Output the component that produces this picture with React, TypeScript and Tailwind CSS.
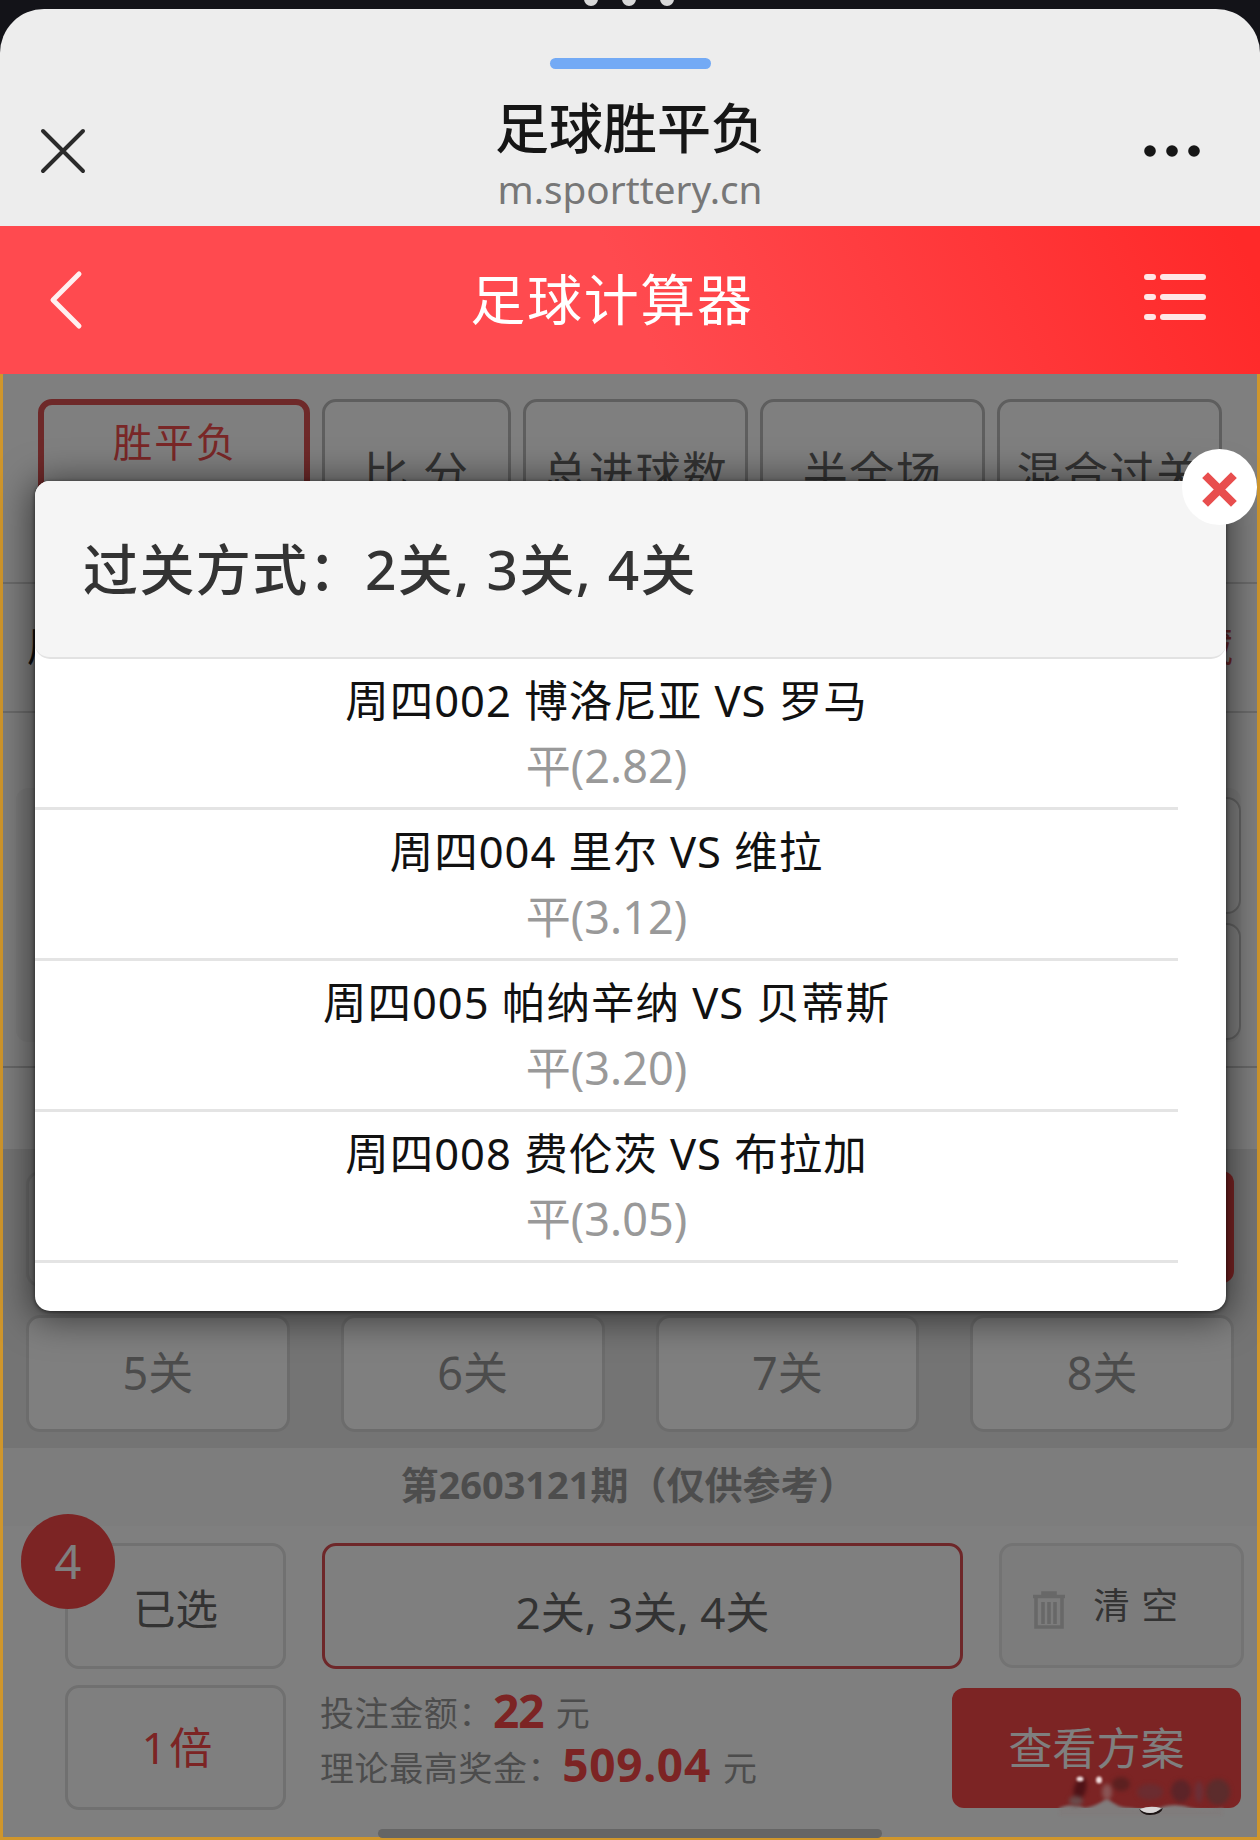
import React from 'react';

interface Match {
  name: string;
  pick: string;
}

const MATCHES: Match[] = [
  { name: '周四002 博洛尼亚 VS 罗马', pick: '平(2.82)' },
  { name: '周四004 里尔 VS 维拉', pick: '平(3.12)' },
  { name: '周四005 帕纳辛纳 VS 贝蒂斯', pick: '平(3.20)' },
  { name: '周四008 费伦茨 VS 布拉加', pick: '平(3.05)' },
];

const TABS = [
  { label: '比 分', width: 'w-[189px]' },
  { label: '总进球数', width: 'w-[225px]' },
  { label: '半全场', width: 'w-[225px]' },
  { label: '混合过关', width: 'w-[225px]' },
];

const PASSES = ['5关', '6关', '7关', '8关'];

const SheetHeader: React.FC = () => (
  <header className="h-[217px] shrink-0 rounded-t-[44px] bg-[#ededed] flex flex-col items-center relative">
    <div className="mt-[49px] w-[161px] h-[11px] rounded-full bg-[#73aaf5]" />
    <div className="w-full flex items-center justify-between pl-[40px] pr-[60px] mt-[20px]">
      <svg className="w-[46px] h-[46px]" viewBox="0 0 46 46" stroke="#2a2a2a" strokeWidth="4" strokeLinecap="round">
        <path d="M3 3L43 43M43 3L3 43" />
      </svg>
      <div className="flex flex-col items-center pl-[30px]">
        <h1 className="text-[54px] leading-[78px] font-medium text-[#161616]">足球胜平负</h1>
        <p className="text-[38.7px] leading-[46px] -mt-px pb-[1px] text-[#777777]">m.sporttery.cn</p>
      </div>
      <svg className="w-[56px] h-[12px]" viewBox="0 0 56 12" fill="#161616">
        <circle cx="6" cy="6" r="5.8" />
        <circle cx="28" cy="6" r="5.8" />
        <circle cx="50" cy="6" r="5.8" />
      </svg>
    </div>
  </header>
);

const NavBar: React.FC = () => (
  <nav className="h-[148px] shrink-0 flex items-center justify-between pl-[48px] pr-[53px] bg-[linear-gradient(65deg,#ff4a4f_50%,#ff2929_98%)]">
    <svg className="w-[36px] h-[60px]" viewBox="0 0 36 60" fill="none" stroke="#fff0f0" strokeWidth="5" strokeLinecap="round" strokeLinejoin="round">
      <path d="M31 4L5 30L31 56" />
    </svg>
    <h2 className="text-[55px] leading-none tracking-[1.7px] text-white pr-[4px] pb-[3px]">足球计算器</h2>
    <svg className="w-[63px] h-[48px] mb-[6px]" viewBox="0 0 63 48" stroke="#ffe6e6" strokeWidth="6" strokeLinecap="round">
      <path d="M3 4H9M19 4H59M3 24H9M19 24H59M3 44H9M19 44H59" />
    </svg>
  </nav>
);

const Tabs: React.FC = () => (
  <div className="h-[210px] shrink-0 border-b-2 border-[#d8d8d8] pt-[25px] pl-[35px] flex gap-[12px]">
    <div className="w-[272px] h-[150px] rounded-[14px] border-[6px] border-[#dc5252] flex justify-center pt-[13px]">
      <span className="text-[39.5px] leading-[48px] tracking-[2px] text-[#f24f4f] pl-[2px]">胜平负</span>
    </div>
    {TABS.map(tab => (
      <div key={tab.label} className={`${tab.width} h-[150px] rounded-[14px] border-[3px] border-[#bcbcbc] flex items-center justify-center`}>
        <span className="text-[45px] leading-none tracking-[1.5px] text-[#666666] whitespace-nowrap pb-[3px]">{tab.label}</span>
      </div>
    ))}
  </div>
);

const MatchArea: React.FC = () => (
  <>
    <div className="h-[129px] shrink-0 border-b-2 border-[#d8d8d8] pl-[24px] pr-[24px] flex items-center justify-between text-[40px]">
      <span className="text-[#222222] pb-[3px]">周</span>
      <span className="text-[#d84f4f] pb-[3px]">收藏</span>
    </div>
    <div className="h-[355px] shrink-0 border-b-2 border-[#d0d0d0] pt-[75px] pl-[13px] pr-[16px]">
      <div className="h-[254px] pt-[9px] rounded-[12px] bg-[#f6f6f6] flex flex-col items-end gap-[9px]">
        <div className="w-[300px] h-[117px] rounded-[14px] border-2 border-[#c8c8c8] bg-white" />
        <div className="w-[300px] h-[117px] rounded-[14px] border-2 border-[#c8c8c8] bg-white" />
      </div>
    </div>
    <div className="h-[81px] shrink-0" />
  </>
);

const PassGrid: React.FC = () => (
  <div className="h-[299px] shrink-0 bg-[#e8e8e8] pt-[22px] pl-[23px] pr-[23px] grid grid-cols-4 gap-x-[51px] gap-y-[28px] content-start">
    {['', '', ''].map((_, i) => (
      <div key={i} className="h-[116px] rounded-[14px] border-[3px] border-[#d9d9d9] bg-[#eeeeee]" />
    ))}
    <div className="h-[112px] rounded-[12px] bg-[#f84848]" />
    {PASSES.map(label => (
      <div key={label} className="h-[117px] rounded-[14px] border-[3px] border-[#d9d9d9] bg-white flex items-center justify-center">
        <span className="text-[45px] leading-none text-[#999999] pb-[2px]">{label}</span>
      </div>
    ))}
  </div>
);

const BetPanel: React.FC = () => (
  <>
    <div className="h-[78px] shrink-0 bg-[#fafafa] flex items-center justify-center">
      <span className="text-[38px] leading-none font-bold text-[#9b9b9b] pr-[3px] pb-[6px]">第2603121期（仅供参考）</span>
    </div>
    <div className="grow bg-white pt-[17px] pl-[62px] pr-[13px] flex flex-col">
      <div className="h-[126px] flex">
        <div className="relative w-[221px] h-[126px] rounded-[14px] border-[3px] border-[#e2e2e2] flex items-center justify-center pt-[7px]">
          <span className="text-[42.5px] leading-none text-[#666666]">已选</span>
          <span className="absolute -left-[47px] -top-[32px] w-[94px] h-[95px] rounded-full bg-[#f84848] text-[#ffffff] text-[47px] flex items-center justify-center">4</span>
        </div>
        <div className="ml-[36px] w-[642px] h-[126px] rounded-[14px] border-[3px] border-[#dc4e52] flex items-center justify-center pt-[12px]">
          <span className="text-[44px] leading-none text-[#666666]">2关, 3关, 4关</span>
        </div>
        <div className="ml-[36px] w-[245px] h-[125px] rounded-[14px] border-[3px] border-[#e6e6e6] bg-[#f9f9f9] flex items-center pl-[31px]">
          <svg className="w-[32px] h-[38px] mt-[8px]" viewBox="0 0 32 38" fill="none" stroke="#d0d0d0" strokeWidth="3.6">
            <path d="M0 5.5H32M10 4V2H22V4M3 6V36H29V6M10 11V33M16 11V33M22 11V33" />
          </svg>
          <span className="ml-[28px] text-[36.5px] leading-none tracking-[1.2px] text-[#666666]">清 空</span>
        </div>
      </div>
      <div className="mt-[16px] h-[125px] flex">
        <div className="w-[221px] h-[125px] rounded-[14px] border-[3px] border-[#e0e0e0] flex items-center justify-center">
          <span className="text-[43px] leading-none text-[#f84848] pl-[3px]">
            1<span className="ml-[3px]">倍</span>
          </span>
        </div>
        <div className="ml-[34px] w-[632px] text-[34px] tracking-[0.6px] text-[#999999] whitespace-nowrap">
          <p className="h-[55px] flex items-center">
            <span className="pt-[2px]">投注金额：</span>
            <b className="text-[46px] leading-[50px] tracking-[-1px] text-[#f84848] pb-[6px]">22</b>
            <span className="ml-[12px] pt-[2px]">元</span>
          </p>
          <p className="h-[55px] flex items-center">
            <span className="pt-[1px]">理论最高奖金：</span>
            <b className="text-[46px] leading-[50px] tracking-[0.7px] text-[#f84848] pb-[7px]">509.04</b>
            <span className="ml-[12px] pt-[1px]">元</span>
          </p>
        </div>
        <div className="mt-[3px] w-[289px] h-[120px] rounded-[12px] bg-[#f84848] flex items-center justify-center">
          <span className="text-[44px] leading-none text-white">查看方案</span>
        </div>
      </div>
    </div>
  </>
);

const Modal: React.FC = () => (
  <section className="absolute left-[35px] top-[481px] w-[1191px] h-[830px] rounded-[15px] bg-white shadow-[0_4px_36px_4px_rgba(0,0,0,0.55),0_1px_4px_rgba(0,0,0,0.6)]">
    <div className="h-[178px] rounded-[15px] border-b-2 border-[#e2e2e2] bg-[#f5f5f5] pl-[48px] flex items-center">
      <h3 className="text-[55px] leading-none tracking-[1.4px] font-medium text-[#333333] whitespace-nowrap pb-[2px]">过关方式：2关, 3关, 4关</h3>
    </div>
    <ul className="w-[1143px]">
      {MATCHES.map(match => (
        <li key={match.name} className="h-[151px] border-b-[3px] border-[#e4e4e4] flex flex-col items-center pt-[8px]">
          <span className="text-[43.5px] leading-[66px] tracking-[1px] text-[#111111] whitespace-nowrap">{match.name}</span>
          <span className="text-[45px] leading-[66px] text-[#999999]">{match.pick}</span>
        </li>
      ))}
    </ul>
    <button className="absolute left-[1147px] -top-[32px] w-[75px] h-[76px] rounded-full bg-white flex items-center justify-center">
      <svg className="w-[35px] h-[35px] mt-[4px]" viewBox="0 0 34 34" stroke="#e84e4e" strokeWidth="8">
        <path d="M3 3L31 31M31 3L3 31" />
      </svg>
    </button>
  </section>
);

// blurred watermark in the bottom right corner
const Smudge: React.FC = () => (
  <svg className="absolute left-[1055px] top-[1770px] w-[180px] h-[50px]" viewBox="0 0 180 50">
    <path d="M4 38Q18 32 30 38Q42 36 52 28Q62 38 76 38Q90 42 104 38Q120 32 136 38Q152 42 168 38V46H4Z" fill="#807c7c" className="blur-[1.5px]" />
    <g className="blur-[2px]">
      <ellipse cx="25" cy="19" rx="6" ry="12" fill="#4e1216" transform="rotate(15 25 19)" />
      <ellipse cx="21" cy="31" rx="7" ry="5" fill="#6a4a4a" />
      <ellipse cx="52" cy="22" rx="5" ry="8" fill="#8a5555" />
      <ellipse cx="66" cy="14" rx="9" ry="7" fill="#5c2020" />
      <ellipse cx="95" cy="22" rx="13" ry="8" fill="#6b2c30" />
      <ellipse cx="126" cy="21" rx="10" ry="11" fill="#5c2428" />
      <ellipse cx="144" cy="22" rx="4" ry="11" fill="#6b3038" />
      <ellipse cx="163" cy="22" rx="12" ry="13" fill="#5c2c2c" />
    </g>
    <g fill="#f0dcdc" className="blur-[1px]">
      <ellipse cx="25" cy="9" rx="3.5" ry="2.5" />
      <ellipse cx="44" cy="10" rx="3" ry="3.5" />
    </g>
    <path d="M84 39Q95 47 108 38Q106 45 95 45Q87 45 84 39Z" fill="#1c1414" />
    <path d="M85 39Q95 35 106 38Q102 43 95 43Q88 43 85 39Z" fill="#d8d4d4" className="blur-[0.5px]" />
  </svg>
);

const App: React.FC = () => {
  return (
    <div className="relative w-[1260px] h-[1840px] overflow-hidden bg-[#131318] pt-[9px] flex flex-col font-['Noto_Sans','Noto_Sans_CJK_SC',sans-serif]">
      <div className="absolute left-[584px] -top-[8px] flex gap-[24px]">
        <i className="w-[14px] h-[14px] rounded-full bg-[#d8d8d8]" />
        <i className="w-[14px] h-[14px] rounded-full bg-[#d8d8d8]" />
        <i className="w-[14px] h-[14px] rounded-full bg-[#d8d8d8]" />
      </div>
      <SheetHeader />
      <NavBar />
      <main className="relative grow border-[3px] border-t-0 border-[#cf962c] bg-white flex flex-col">
        <Tabs />
        <MatchArea />
        <PassGrid />
        <BetPanel />
        <div className="absolute inset-0 bg-black/50" />
        <div className="absolute left-[375px] -bottom-px w-[504px] h-[9px] rounded-full bg-[#656565]" />
      </main>
      <Modal />
      <Smudge />
    </div>
  );
};

export default App;
